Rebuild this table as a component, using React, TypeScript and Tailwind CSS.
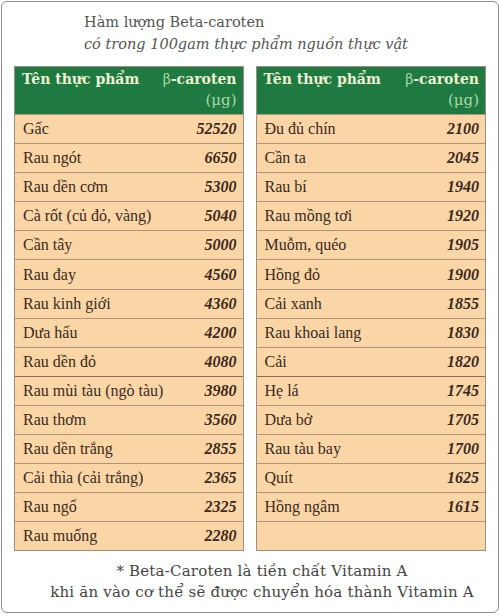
import React from "react";

const left: [string, string][] = [
  ["Gấc", "52520"],
  ["Rau ngót", "6650"],
  ["Rau dền cơm", "5300"],
  ["Cà rốt (củ đỏ, vàng)", "5040"],
  ["Cần tây", "5000"],
  ["Rau đay", "4560"],
  ["Rau kinh giới", "4360"],
  ["Dưa hấu", "4200"],
  ["Rau dền đỏ", "4080"],
  ["Rau mùi tàu (ngò tàu)", "3980"],
  ["Rau thơm", "3560"],
  ["Rau dền trắng", "2855"],
  ["Cải thìa (cải trắng)", "2365"],
  ["Rau ngổ", "2325"],
  ["Rau muống", "2280"],
];

const right: [string, string][] = [
  ["Đu đủ chín", "2100"],
  ["Cần ta", "2045"],
  ["Rau bí", "1940"],
  ["Rau mồng tơi", "1920"],
  ["Muỗm, quéo", "1905"],
  ["Hồng đỏ", "1900"],
  ["Cải xanh", "1855"],
  ["Rau khoai lang", "1830"],
  ["Cải", "1820"],
  ["Hẹ lá", "1745"],
  ["Dưa bở", "1705"],
  ["Rau tàu bay", "1700"],
  ["Quít", "1625"],
  ["Hồng ngâm", "1615"],
  ["", ""],
];

function Table({ rows, width }: { rows: [string, string][]; width: string }) {
  return (
    <div className={`${width} flex flex-col border border-[#9c8e80] bg-[#fad6a6]`}>
      <div className="h-[47px] bg-[#1e7a41] flex justify-between pl-[7px] pr-[6px] pt-[2px] font-['DejaVu_Serif',serif] leading-[21px]">
        <div className="font-bold text-[14px] text-[#eef0d2]">Tên thực phẩm</div>
        <div className="text-right">
          <div className="text-[14px]">
            <span className="text-[#a9d9a4]">β</span>
            <span className="font-bold text-[#eef0d2]">-caroten</span>
          </div>
          <div className="text-[#a9d9a4] text-[15px]">(μg)</div>
        </div>
      </div>
      {rows.map(([name, val], i) => (
        <div
          key={i}
          className={`h-[29.1px] flex items-center justify-between pl-[8px] pr-[6px] border-t ${
            i === 9 ? "border-[#8a6f55]" : "border-[#b0937a]"
          } font-['Liberation_Serif',serif] text-[16px] text-[#3a2a1f]`}
        >
          <span>{name}</span>
          <span className="font-bold italic">{val}</span>
        </div>
      ))}
    </div>
  );
}

export default function App() {
  return (
    <div className="w-[500px] h-[616px] bg-white pt-px pl-px">
      <div className="w-[498px] h-[612px] border border-[#8c8c8c] rounded-[6px] bg-white flex flex-col px-[12px] pt-[9px]">
        <div className="pl-[70px] font-['DejaVu_Serif',serif] text-[14.5px] leading-[22px] text-[#555]">
          <div>Hàm lượng Beta-caroten</div>
          <div className="italic">có trong 100gam thực phẩm nguồn thực vật</div>
        </div>
        <div className="mt-[11px] flex gap-[12px]">
          <Table rows={left} width="w-[230px]" />
          <Table rows={right} width="w-[231px]" />
        </div>
        <div className="mt-[10px] pl-[24px] text-center font-['DejaVu_Serif',serif] text-[15px] leading-[21px] tracking-[0.2px] text-[#444]">
          <div>* Beta-Caroten là tiền chất Vitamin A</div>
          <div>khi ăn vào cơ thể sẽ được chuyển hóa thành Vitamin A</div>
        </div>
      </div>
    </div>
  );
}
